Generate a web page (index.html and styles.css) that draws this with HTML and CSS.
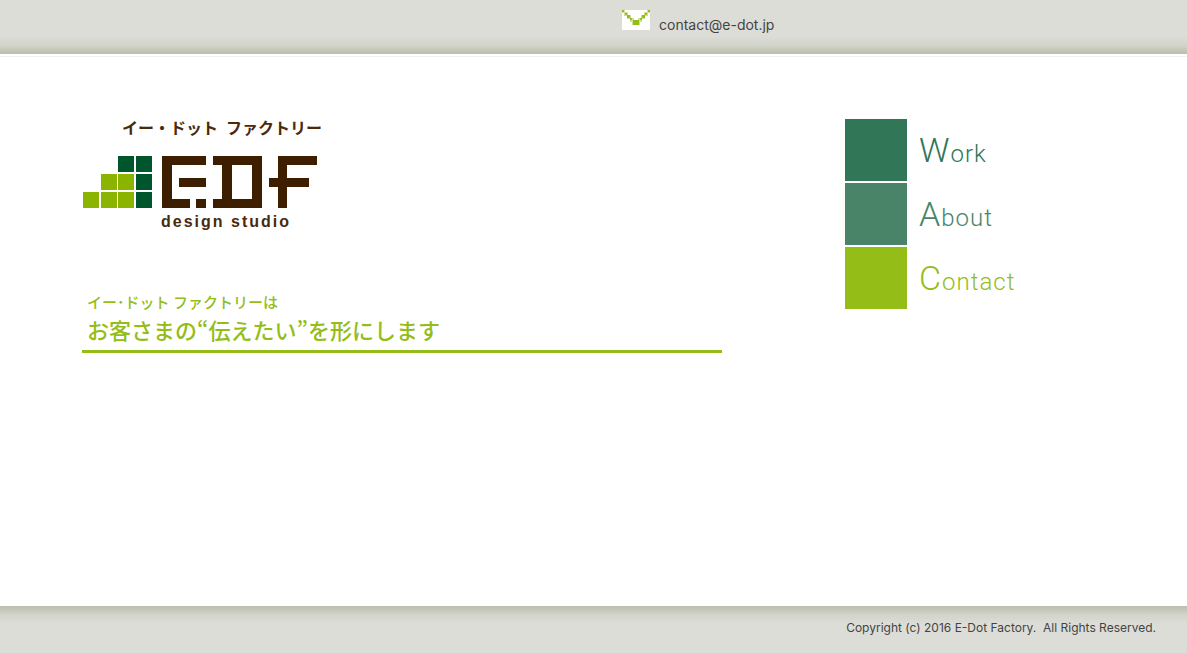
FILE: index.html
```html
<!DOCTYPE html>
<html lang="ja">
<head>
<meta charset="utf-8">
<meta name="viewport" content="width=device-width, initial-scale=1">
<title>E-Dot Factory</title>
<link rel="stylesheet" href="styles.css">
</head>
<body>
<header class="site-header">
  <a class="mail" href="mailto:contact@e-dot.jp">
    <svg class="mail-icon" width="28" height="20" viewBox="0 0 28 20" shape-rendering="crispEdges" aria-hidden="true">
      <path fill="#fff" d="M0 0h28v20H0z"/>
      <path fill="#cfe09a" d="M0 0h3v3H0zM2 2h4v4H2zM5 5h4v4H5zM8 8h4v4H8zM25 0h3v3h-3zM22 2h4v4h-4zM19 5h4v4h-4zM16 8h4v4h-4zM10 10h8v5h-8z"/>
      <path fill="#94bd17" d="M0 0h2v2H0zM3 3h2v2H3zM5 5h3v3H5zM8 8h2v2H8zM26 0h2v2h-2zM23 3h2v2h-2zM20 5h3v3h-3zM18 8h2v2h-2zM11 10h6v5h-6z"/>
    </svg>
    <span class="mail-text">contact@e-dot.jp</span>
  </a>
</header>

<div class="page">
  <main class="main">
    <a class="logo" href="#">
      <span class="logo-kana"><span>イー・ドット</span><span>ファクトリー</span></span>
      <svg class="logo-mark" width="235" height="52" viewBox="0 0 235 52" role="img" aria-label="EDF">
        <path fill="#8ab400" d="M0 36h16v16H0zM18 36h16v16H18zM35 36h16v16H35zM18 18h16v16H18zM35 18h16v16H35z"/>
        <path fill="#00562c" d="M35 0h16v16H35zM53 0h16v16H53zM53 18h16v16H53zM53 36h16v16H53z"/>
        <path fill="#3d1f00" fill-rule="evenodd" d="M79 0h44v9H89v34h18v9H79zM96 22h27v9H96zM113 43h10v9h-10zM130 0h49v52h-49v-9h9V9h-9zM149 9v34h20V9zM195 0h39v9h-30v13h22v9h-22v21h-9V31h-9v-9h9z"/>
      </svg>
      <span class="logo-sub">design studio</span>
    </a>
    <h1 class="catch">
      <span class="catch-small">イー･ドット ファクトリーは</span>
      <span class="catch-large">お客さまの“伝えたい”を形にします</span>
    </h1>
  </main>

  <nav class="menu">
    <a class="menu-item work" href="#work"><span class="tile"></span><span class="label">Work</span></a>
    <a class="menu-item about" href="#about"><span class="tile"></span><span class="label">About</span></a>
    <a class="menu-item contact" href="#contact"><span class="tile"></span><span class="label">Contact</span></a>
  </nav>
</div>

<footer class="site-footer">Copyright (c) 2016 E-Dot Factory.&nbsp; All Rights Reserved.</footer>
</body>
</html>
```
FILE: styles.css
```css
* { box-sizing: border-box; }

body {
  margin: 0;
  min-height: 100vh;
  display: flex;
  flex-direction: column;
  background: #fff;
  color: #444;
  font-family: Inter, "Noto Sans CJK JP", sans-serif;
}

a { color: inherit; text-decoration: none; }

.site-header {
  height: 57px;
  padding: 10px 0 0 622px;
  background: linear-gradient(#dcddd7 0 36px, #d3d4cb 45px, #bcbdae 54px, #fff 54px 56px, #f1f1ef 56px);
}

.mail {
  display: inline-flex;
  gap: 9px;
}

.mail-text {
  padding-top: 5px;
  font-size: 14px;
  line-height: 20px;
}

.page {
  flex: 1;
  display: flex;
  justify-content: space-between;
  width: 100%;
  padding: 62px 82px 32px;
}

.main {
  width: 640px;
  font-family: "Noto Sans CJK JP", sans-serif;
}

.logo {
  display: flex;
  flex-direction: column;
  align-items: flex-start;
  width: 240px;
  color: #4a2a0a;
}

.logo-kana {
  display: flex;
  gap: 8px;
  padding-left: 40px;
  font-size: 16px;
  font-weight: 700;
  line-height: 16px;
  white-space: nowrap;
}

.logo-mark {
  margin: 21px 0 4px 1px;
}

.logo-sub {
  padding-left: 79px;
  font: 700 16px/20px "Liberation Sans", Arial, sans-serif;
  letter-spacing: 2px;
  white-space: nowrap;
}

.catch {
  margin: 61px 0 0;
  padding: 0 0 3px 5px;
  border-bottom: 3px solid #94bd17;
  color: #94bd17;
  font-weight: 500;
}

.catch span { display: block; }

.catch-small {
  font-size: 15px;
  line-height: 18px;
}

.catch-large {
  font-size: 22px;
  line-height: 36px;
}

.menu {
  display: flex;
  flex-direction: column;
  gap: 2px;
  width: 260px;
}

.menu-item {
  display: flex;
  gap: 12px;
}

.tile {
  width: 62px;
  height: 62px;
  background: currentColor;
}

.label {
  padding-top: 11px;
  font: 300 24px/40px Roboto, sans-serif;
  letter-spacing: 1px;
}

.label::first-letter { font-size: 34px; }

.work { color: #317657; }
.about { color: #498469; }
.contact { color: #94bd17; }

.site-footer {
  min-height: 47px;
  padding: 12px 31px 0 0;
  background: linear-gradient(#bcbdae, #d3d4cb 9px, #dcddd7 18px);
  font-size: 12px;
  line-height: 20px;
  text-align: right;
}
```
